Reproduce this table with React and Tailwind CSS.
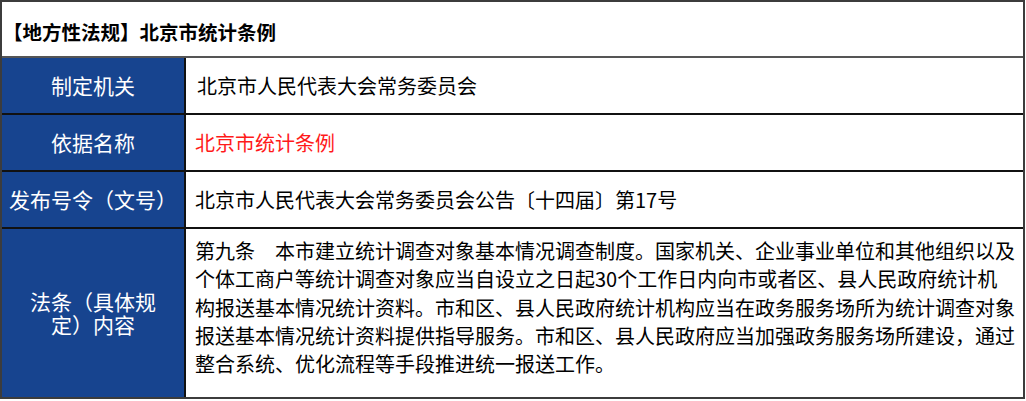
const rows = [
  { label: ["制定机关"], value: "北京市人民代表大会常务委员会", pad: "pl-[11px]" },
  { label: ["依据名称"], value: "北京市统计条例", red: true },
  { label: ["发布号令（文号）"], value: "北京市人民代表大会常务委员会公告〔十四届〕第17号" },
];

const lines = [
  "第九条　本市建立统计调查对象基本情况调查制度。国家机关、企业事业单位和其他组织以及",
  "个体工商户等统计调查对象应当自设立之日起30个工作日内向市或者区、县人民政府统计机",
  "构报送基本情况统计资料。市和区、县人民政府统计机构应当在政务服务场所为统计调查对象",
  "报送基本情况统计资料提供指导服务。市和区、县人民政府应当加强政务服务场所建设，通过",
  "整合系统、优化流程等手段推进统一报送工作。",
];

const font = { fontFamily: '"Noto Sans CJK SC", "Noto Sans", sans-serif' };

export default function App() {
  return (
    <div className="w-[1026px] h-[401px] bg-white" style={font}>
      <div className="w-[1025px] border-2 border-[#3c3c3c] bg-white">
        {/* title */}
        <div className="h-[56px] flex items-center pl-[1px] pt-[5px] border-b-2 border-[#555] text-[19.5px] font-bold text-black">
          【地方性法规】北京市统计条例
        </div>

        {rows.map((r) => (
          <div key={r.value} className="grid grid-cols-[184px_1fr] h-[57px] border-b-2 border-[#111]">
            <div className="bg-[#17448f] border-r-2 border-[#111] flex items-center justify-center text-white text-[21px] leading-none whitespace-nowrap">
              {r.label}
            </div>
            <div
              className={`flex items-center ${r.pad || "pl-[9px]"} text-[20px] whitespace-nowrap ${
                r.red ? "text-[#ff1a1a]" : "text-black"
              }`}
            >
              {r.value}
            </div>
          </div>
        ))}

        {/* clause content */}
        <div className="grid grid-cols-[184px_1fr] h-[168px]">
          <div className="bg-[#17448f] border-r-2 border-[#111] flex items-center justify-center text-white text-[21px] leading-[23px]">
            <p className="w-[132px] text-center">法条（具体规定）内容</p>
          </div>
          <div className="pl-[9px] pt-[8px] text-[20px] leading-[28.3px] text-black">
            {lines.map((l) => (
              <div key={l} className="whitespace-nowrap">
                {l}
              </div>
            ))}
          </div>
        </div>
      </div>
    </div>
  );
}
